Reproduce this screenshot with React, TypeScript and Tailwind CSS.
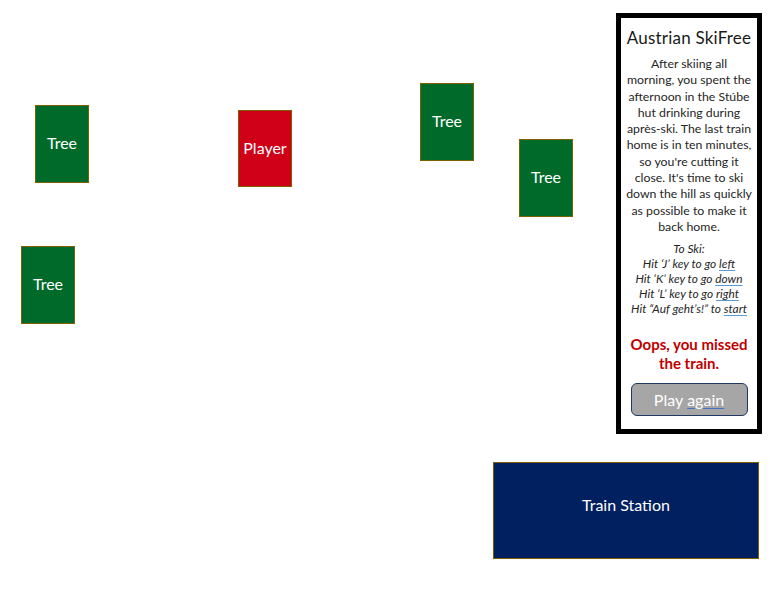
const sprites = [
  { label: 'Tree', x: 35, y: 105, w: 54, h: 78, bg: 'bg-[#006a2b]' },
  { label: 'Player', x: 238, y: 110, w: 54, h: 77, bg: 'bg-[#cf0017]' },
  { label: 'Tree', x: 420, y: 83, w: 54, h: 78, bg: 'bg-[#006a2b]' },
  { label: 'Tree', x: 519, y: 139, w: 54, h: 78, bg: 'bg-[#006a2b]' },
  { label: 'Tree', x: 21, y: 246, w: 54, h: 78, bg: 'bg-[#006a2b]' },
]

const story = [
  'After skiing all',
  'morning, you spent the',
  'afternoon in the Stúbe',
  'hut drinking during',
  'après-ski. The last train',
  'home is in ten minutes,',
  "so you're cutting it",
  "close. It's time to ski",
  'down the hill as quickly',
  'as possible to make it',
  'back home.',
]

function Squiggle({ children }: { children: React.ReactNode }) {
  return (
    <span className="underline decoration-[#5b9bd5] decoration-1 underline-offset-2">{children}</span>
  )
}

export default function App() {
  return (
    <div className="relative w-[770px] h-[590px] bg-white overflow-hidden font-['Lato','Open_Sans',sans-serif]">
      {sprites.map((s, i) => (
        <div
          key={i}
          className={`absolute flex items-center justify-center pb-[2px] border border-[#7f6000] text-white text-[16px] ${s.bg}`}
          style={{ left: s.x, top: s.y, width: s.w, height: s.h }}
        >
          {s.label}
        </div>
      ))}

      <div className="absolute left-[493px] top-[462px] w-[266px] h-[97px] flex items-center justify-center pb-[12px] bg-[#002060] border border-[#7f6000] text-white text-[16px]">
        Train Station
      </div>

      {/* info panel */}
      <div className="absolute left-[616px] top-[13px] w-[146px] h-[421px] border-[5px] border-black bg-white flex flex-col items-center pt-[9px]">
        <h1 className="text-[17px] leading-[22px] text-[#1a1a1a] tracking-[0.2px]">Austrian SkiFree</h1>
        <p className="mt-[7px] text-[12.3px] leading-[16.3px] text-[#262626] text-center whitespace-nowrap">
          {story.map((line, i) => (
            <span key={i} className="block">{line}</span>
          ))}
        </p>
        <div className="mt-[6px] text-[11.9px] leading-[15px] italic text-[#262626] text-center whitespace-nowrap">
          <div>To Ski:</div>
          <div>Hit ‘J’ key to go <Squiggle>left</Squiggle></div>
          <div>Hit ‘K’ key to go <Squiggle>down</Squiggle></div>
          <div>Hit ‘L’ key to go <Squiggle>right</Squiggle></div>
          <div>Hit “Auf geht’s!” to <Squiggle>start</Squiggle></div>
        </div>
        <div className="mt-[19px] text-[15px] leading-[19px] font-bold text-[#c00000] text-center">
          Oops, you missed
          <br />
          the train.
        </div>
        <button className="mt-[10px] w-[117px] h-[33px] rounded-[6px] bg-[#a6a6a6] border border-[#1f3864] text-white text-[16px] flex items-center justify-center">
          Play <span className="ml-1 underline decoration-[#4472c4] underline-offset-2">again</span>
        </button>
      </div>
    </div>
  )
}
